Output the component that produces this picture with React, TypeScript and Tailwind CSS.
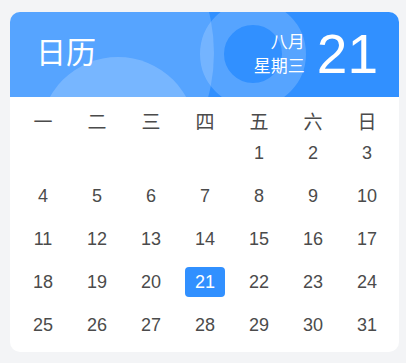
const weekdays = ["一", "二", "三", "四", "五", "六", "日"];

// August starts on a Friday, so four blank cells lead the grid
const days: (number | null)[] = [
  null,
  null,
  null,
  null,
  ...Array.from({ length: 31 }, (_, i) => i + 1),
];

const today = 21;

export default function App() {
  return (
    <div
      className="min-h-[363px] bg-[#f3f4f6] pt-[12px] pl-[10px] pr-[7px]"
      style={{ fontFamily: '"Liberation Sans", "Noto Sans CJK SC", sans-serif' }}
    >
      <div className="w-[389px] overflow-hidden rounded-[10px] bg-white">
        <header className="relative flex h-[85px] items-center justify-between overflow-hidden bg-[#3190ff] pl-[26px] pr-[21px] text-white">
          <div className="absolute left-[-136px] top-[-129px] h-[340px] w-[340px] rounded-full bg-white/[0.18]" />
          <div className="absolute left-[30px] top-[45px] h-[156px] w-[156px] rounded-full bg-white/20" />
          <div className="absolute left-[190px] top-[-11px] h-[106px] w-[106px] rounded-full border-[24px] border-white/[0.18]" />

          <h1 className="relative mb-[4px] text-[30px] leading-none">日历</h1>

          <div className="relative flex items-center gap-[12px]">
            <div className="text-right text-[17px] leading-[24px]">
              <div>八月</div>
              <div>星期三</div>
            </div>
            <div className="text-[55px] leading-none">21</div>
          </div>
        </header>

        <div className="px-[6px] pt-[11px] pb-[12px] pr-[5px] text-[18px] text-[#4b4b4b]">
          <div className="grid h-[30px] grid-cols-7 items-center text-center text-[19px]">
            {weekdays.map((d) => (
              <div key={d}>{d}</div>
            ))}
          </div>
          <div className="grid grid-cols-7 gap-y-[13px]">
            {days.map((d, i) => (
              <div key={i} className="flex h-[30px] items-center justify-center">
                {d === today ? (
                  <span className="flex h-[30px] w-[40px] items-center justify-center rounded-[4px] bg-[#3190ff] text-white">
                    {d}
                  </span>
                ) : (
                  d
                )}
              </div>
            ))}
          </div>
        </div>
      </div>
    </div>
  );
}
